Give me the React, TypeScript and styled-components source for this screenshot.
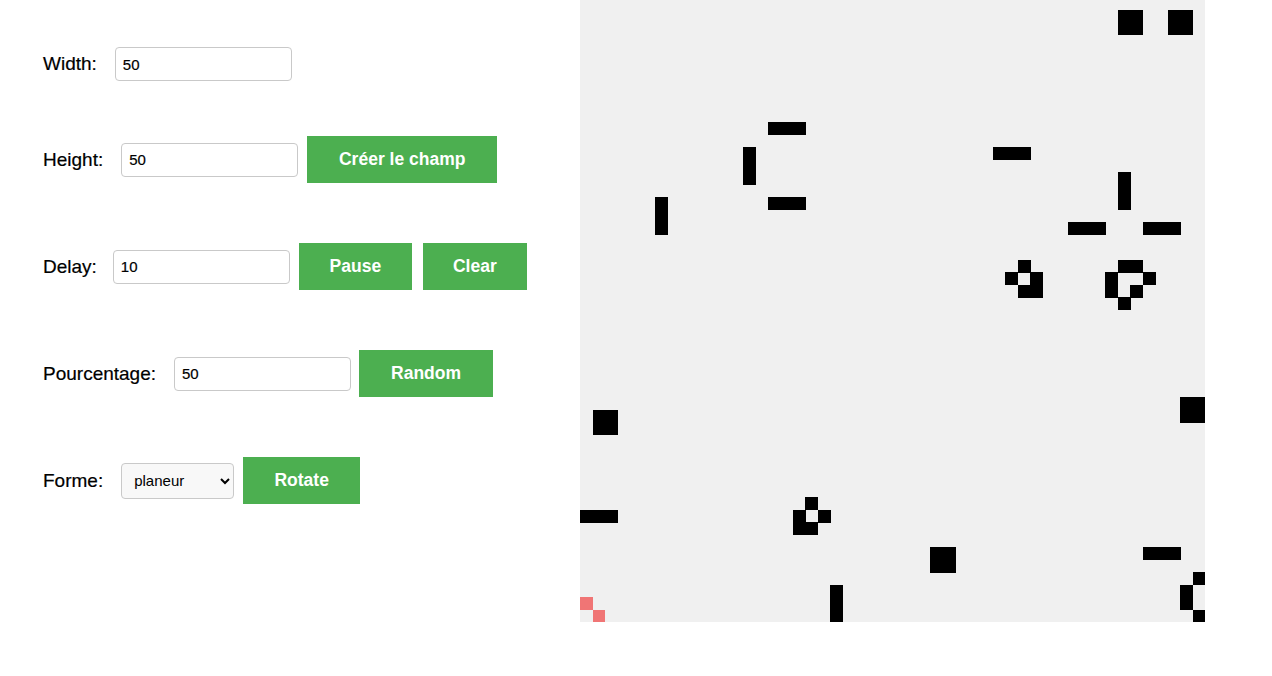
import React from "react";
import styled, { createGlobalStyle } from "styled-components";

const GlobalStyle = createGlobalStyle`
  html, body { margin: 0; padding: 0; background: #ffffff; }
  body { font-family: "Liberation Sans", Arial, sans-serif; color: #000; overflow: hidden; }
`;

const Page = styled.div`
  display: flex;
  align-items: flex-start;
  width: 1272px;
  height: 676px;
`;

const Controls = styled.div`
  width: 537px;
  padding: 47px 0 0 43px;
  display: flex;
  flex-direction: column;
`;

const Row = styled.div<{ $top: number }>`
  display: flex;
  align-items: center;
  margin-top: ${(p) => p.$top}px;
`;

const Label = styled.label<{ $space?: number }>`
  font-size: 19px;
  margin-right: ${(p) => p.$space ?? 18}px;
  white-space: nowrap;
  -webkit-text-stroke: 0.2px #000;
`;

const Input = styled.input`
  box-sizing: border-box;
  width: 177px;
  height: 34px;
  padding: 0 7px;
  border: 1px solid #c9c9c9;
  border-radius: 4px;
  font-family: "Liberation Sans", Arial, sans-serif;
  font-size: 15px;
  color: #000;
  background: #fff;
  outline: none;
  -webkit-text-stroke: 0.2px #000;
`;

const Select = styled.select`
  box-sizing: border-box;
  width: 113px;
  height: 36px;
  padding: 0 6px 0 8px;
  border: 1px solid #c9c9c9;
  border-radius: 4px;
  font-family: "Liberation Sans", Arial, sans-serif;
  font-size: 15px;
  color: #000;
  background: #f8f8f8;
`;

const Button = styled.button<{ $gap?: number; $w: number }>`
  box-sizing: border-box;
  width: ${(p) => p.$w}px;
  height: 47px;
  margin-left: ${(p) => p.$gap ?? 9}px;
  padding: 0;
  border: none;
  background: #4caf50;
  color: #fff;
  font-family: "Liberation Sans", Arial, sans-serif;
  font-weight: bold;
  font-size: 17.5px;
  white-space: nowrap;
  cursor: pointer;
`;

const Board = styled.svg`
  display: block;
  flex: none;
  margin-top: -3px;
  background: #f0f0f0;
`;

const CELL = 12.5;

const alive: [number, number][] = [
  [1, 43], [1, 44], [2, 43], [2, 44],
  [1, 47], [1, 48], [2, 47], [2, 48],
  [10, 15], [10, 16], [10, 17],
  [12, 13], [13, 13], [14, 13],
  [16, 15], [16, 16], [16, 17],
  [16, 6], [17, 6], [18, 6],
  [12, 33], [12, 34], [12, 35],
  [14, 43], [15, 43], [16, 43],
  [18, 39], [18, 40], [18, 41],
  [18, 45], [18, 46], [18, 47],
  [21, 35], [22, 34], [22, 36], [23, 35], [23, 36],
  [21, 43], [21, 44], [22, 42], [22, 45], [23, 42], [23, 44], [24, 43],
  [32, 48], [32, 49], [33, 48], [33, 49],
  [33, 1], [33, 2], [34, 1], [34, 2],
  [41, 0], [41, 1], [41, 2],
  [40, 18], [41, 17], [41, 19], [42, 17], [42, 18],
  [44, 28], [44, 29], [45, 28], [45, 29],
  [44, 45], [44, 46], [44, 47],
  [46, 49], [47, 48], [48, 48], [49, 49],
  [47, 20], [48, 20], [49, 20],
];

const highlighted: [number, number][] = [
  [48, 0], [49, 1],
];

export default function App() {
  return (
    <>
      <GlobalStyle />
      <Page>
        <Controls>
          <Row $top={0}>
            <Label>Width:</Label>
            <Input defaultValue="50" />
          </Row>
          <Row $top={55}>
            <Label>Height:</Label>
            <Input defaultValue="50" />
            <Button $w={190}>Créer le champ</Button>
          </Row>
          <Row $top={60}>
            <Label $space={16}>Delay:</Label>
            <Input defaultValue="10" />
            <Button $w={113}>Pause</Button>
            <Button $w={104} $gap={11}>Clear</Button>
          </Row>
          <Row $top={60}>
            <Label>Pourcentage:</Label>
            <Input defaultValue="50" />
            <Button $w={134} $gap={8}>Random</Button>
          </Row>
          <Row $top={60}>
            <Label>Forme:</Label>
            <Select defaultValue="planeur">
              <option value="planeur">planeur</option>
              <option value="clignotant">clignotant</option>
              <option value="bloc">bloc</option>
            </Select>
            <Button $w={117}>Rotate</Button>
          </Row>
        </Controls>
        <Board width={625} height={625} viewBox="0 0 625 625" shapeRendering="crispEdges">
          {alive.map(([r, c]) => (
            <rect key={`a${r}-${c}`} x={c * CELL} y={r * CELL} width={CELL + 0.5} height={CELL + 0.5} fill="#000" />
          ))}
          {highlighted.map(([r, c]) => (
            <rect key={`h${r}-${c}`} x={c * CELL} y={r * CELL} width={CELL} height={CELL} fill="#f07575" />
          ))}
        </Board>
      </Page>
    </>
  );
}
